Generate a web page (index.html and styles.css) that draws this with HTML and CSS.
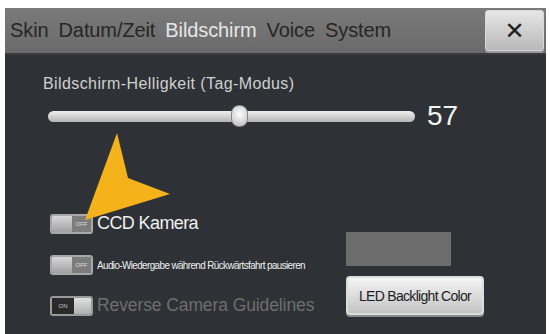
FILE: index.html
```html
<!DOCTYPE html>
<html lang="de">
<head>
  <meta charset="UTF-8" />
  <title>Einstellungen</title>
  <link rel="stylesheet" href="styles.css">
</head>
<body>
  <div class="screen">
    <!-- Tab bar -->
    <div class="tabs">
      <span class="tab">Skin</span>
      <span class="tab">Datum/Zeit</span>
      <span class="tab active">Bildschirm</span>
      <span class="tab">Voice</span>
      <span class="tab">System</span>
      <button class="close">&#x2715;</button>
    </div>

    <!-- Settings -->
    <div class="content">
      <div class="label">Bildschirm-Helligkeit (Tag-Modus)</div>
      <div class="slider-row">
        <div class="track">
          <div class="thumb"></div>
        </div>
        <span class="value">57</span>
      </div>

      <div class="bottom">
        <div class="options">
          <div class="option">
            <span class="toggle off"><i></i><b>OFF</b></span>
            <span class="opt-text">CCD Kamera</span>
          </div>
          <div class="option">
            <span class="toggle off"><i></i><b>OFF</b></span>
            <span class="opt-text small">Audio-Wiedergabe während Rückwärtsfahrt pausieren</span>
          </div>
          <div class="option">
            <span class="toggle on"><b>ON</b><i></i></span>
            <span class="opt-text dim">Reverse Camera Guidelines</span>
          </div>
        </div>
        <div class="led">
          <div class="swatch"></div>
          <button class="led-button">LED Backlight Color</button>
        </div>
      </div>

      <!-- yellow pointer -->
      <svg class="pointer" width="100" height="100" viewBox="0 0 100 100">
        <polygon points="37,10 48,55 90,71 5,97" fill="#f5b31b" />
      </svg>
    </div>
  </div>
</body>
</html>
```

FILE: styles.css
```css
* {
  margin: 0;
  padding: 0;
  box-sizing: border-box;
}

body {
  background: #fff;
  font-family: "Liberation Sans", Arial, sans-serif;
}

.screen {
  margin: 8px 4px 0 5px;
  height: 326px;
  background: #2e3135;
  overflow: hidden;
}

/* Tabs */
.tabs {
  height: 47px;
  background: linear-gradient(#7a7a7a, #6a6a6a);
  border-bottom: 2px solid #3a3a3a;
  display: flex;
  align-items: center;
  padding-left: 5px;
  gap: 10px;
}

.tab {
  font-size: 20px;
  color: #262626;
  letter-spacing: -0.1px;
}

.tab.active {
  color: #e6e6e6;
}

.close {
  margin-left: auto;
  margin-right: 2px;
  width: 59px;
  height: 41px;
  border: 1px solid #d8d8d8;
  border-radius: 3px;
  background: linear-gradient(#e6e6e6, #b9b9b9);
  box-shadow: 0 2px 0 #9a9a9a;
  color: #222;
  font-size: 24px;
  font-weight: bold;
  font-family: "DejaVu Sans", sans-serif;
}

/* Content */
.content {
  position: relative;
  padding: 20px 0 0 38px;
}

.label {
  font-size: 16px;
  color: #d0d0d0;
  letter-spacing: 0.4px;
}

.slider-row {
  display: flex;
  align-items: center;
  margin-top: 9px;
  height: 28px;
}

.track {
  position: relative;
  margin-left: 5px;
  width: 367px;
  height: 11px;
  border-radius: 6px;
  background: linear-gradient(#f0f0f0, #b4b4b4);
}

.thumb {
  position: absolute;
  left: 183px;
  top: -6px;
  width: 17px;
  height: 22px;
  border-radius: 8px;
  background: radial-gradient(circle at 50% 40%, #ffffff, #b8b8b8);
  border: 1px solid #888;
}

.value {
  margin-left: 12px;
  font-size: 28px;
  color: #f2f2f2;
}

.bottom {
  display: flex;
  margin-top: 83px;
}

.options {
  display: flex;
  flex-direction: column;
  gap: 20px;
  width: 303px;
  margin-left: 7px;
}

.option {
  display: flex;
  align-items: center;
  gap: 4px;
  height: 21px;
}

.toggle {
  display: flex;
  flex-shrink: 0;
  width: 43px;
  height: 20px;
  border: 2px solid #a8a8a8;
  border-radius: 3px;
  overflow: hidden;
}

.toggle i {
  flex: 1;
  background: linear-gradient(#d8d8d8, #a0a0a0);
}

.toggle b {
  width: 19px;
  font-size: 6px;
  font-weight: normal;
  color: #ddd;
  background: #7c7c7c;
  display: flex;
  align-items: center;
  justify-content: center;
}

.toggle.on {
  border-color: #9a9a9a;
}

.toggle.on b {
  width: 22px;
  background: #2a2a2a;
  color: #ccc;
}

.toggle.on i {
  background: linear-gradient(#e0e0e0, #b0b0b0);
}

.opt-text {
  font-size: 18px;
  color: #f0f0f0;
  letter-spacing: -0.6px;
}

.opt-text.small {
  font-size: 11.5px;
  letter-spacing: -0.7px;
  transform: scaleX(0.86);
  transform-origin: left center;
  white-space: nowrap;
}

.opt-text.dim {
  color: #6e6e6e;
  font-size: 17.5px;
  letter-spacing: -0.1px;
  white-space: nowrap;
}

.led {
  display: flex;
  flex-direction: column;
  gap: 10px;
  margin-top: 19px;
  margin-left: -7px;
}

.swatch {
  width: 105px;
  height: 34px;
  background: #6c6c6c;
}

.led-button {
  width: 138px;
  height: 39px;
  border: 2px solid #ddd;
  border-radius: 4px;
  background: linear-gradient(#f4f4f4, #c4c4c4);
  box-shadow: 0 2px 0 #8a8a8a;
  font-size: 14px;
  color: #222;
  letter-spacing: -0.7px;
}

.pointer {
  position: absolute;
  left: 75px;
  top: 68px;
}
```
